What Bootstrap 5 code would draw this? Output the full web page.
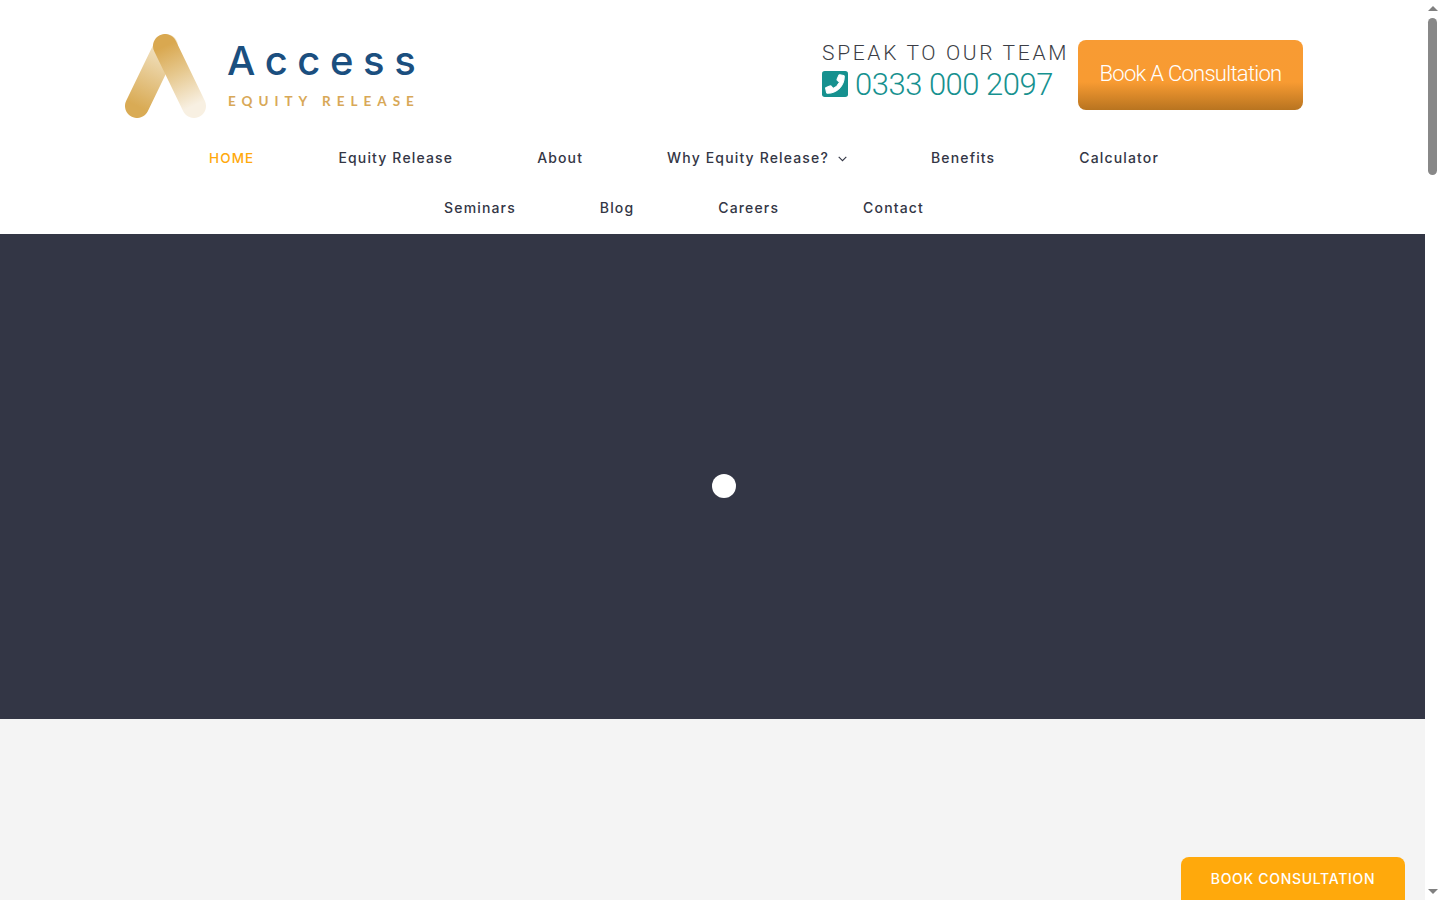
<!DOCTYPE html>
<html lang="en">
<head>
  <meta charset="UTF-8">
  <title>Access Equity Release</title>
  <link href="https://cdn.jsdelivr.net/npm/bootstrap@5.3.3/dist/css/bootstrap.min.css" rel="stylesheet">
  <style>
    html, body { height: 100%; overflow: hidden; }
    body { font-family: "Roboto", "Liberation Sans", sans-serif; background: #fff; }
    .page-col { width: 1425px; height: 900px; }
    .top-row { padding: 34px 122px 15px 125px; height: 133px; }
    .logo-mark { width: 82px; height: 84px; }
    .logo-words { margin-left: 21px; padding-top: 7px; }
    .logo-name { font: 450 40px/1 "Inter", sans-serif; letter-spacing: 9.6px; color: #1b4f7f; height: 42px; margin-left: -1px; }
    .logo-sub { font: 700 13.5px/1 "Lato", sans-serif; letter-spacing: 6px; color: #d8a857; margin-top: 12px; white-space: nowrap; }
    .speak-line { font-size: 21px; font-weight: 300; letter-spacing: 2.65px; line-height: 26px; color: #3b3d45; white-space: nowrap; margin-top: 6px; margin-left: -1px; }
    .phone-line { font-size: 31px; font-weight: 300; letter-spacing: -.5px; line-height: 36px; color: #16918f; margin-top: 1px; margin-left: -1px; }
    .phone-line svg { width: 26px; height: 26px; margin-right: 7px; margin-bottom: 3px; }
    .book-btn { width: 225px; height: 70px; margin-left: 9px; margin-top: 6px; background: linear-gradient(#f89b33 0, #f89b32 60%, #b87420 100%); color: #fff; font-size: 22px; font-weight: 300; letter-spacing: -.72px; border-radius: 8px; border: 0; padding: 0 0 3px; }
    .book-btn:hover { color: #fff; }
    .menu-row { padding-right: 57px; }
    .menu-row .nav-link { font: 450 14px/50px "Inter", sans-serif; letter-spacing: 1.15px; color: #333645; padding: 0 42px; }
    .menu-row .nav-link.on-page { color: #ffa90c; text-transform: uppercase; font-size: 13.5px; }
    .menu-row svg { width: 9px; height: 6px; margin-left: 9px; vertical-align: 1px; }
    .hero-band { height: 485px; background: #333645; padding: 19px 0 0 23px; }
    .load-dot { width: 24px; height: 24px; background: #fff; border-radius: 50%; }
    .rest-band { background: #f4f4f4; }
    .float-btn { position: fixed; left: 1181px; bottom: 0; width: 224px; height: 43px; background: #ffa90c; color: #fff; border-radius: 8px 8px 0 0; font: 500 14px/43px "Inter", sans-serif; letter-spacing: .7px; text-align: center; padding-bottom: 1px; }
    .fake-scroll { width: 15px; height: 900px; background: #fff; }
    .scroll-thumb { width: 9px; height: 157px; background: #888; border-radius: 5px; margin: 7px auto 0; }
    .scroll-up, .scroll-down { width: 0; height: 0; border-left: 5px solid transparent; border-right: 5px solid transparent; margin: 0 auto; }
    .scroll-up { border-bottom: 5px solid #808080; margin-top: 6px; }
    .scroll-down { border-top: 5px solid #808080; margin-top: auto; margin-bottom: 6px; }
  </style>
</head>
<body class="d-flex">

  <div class="page-col d-flex flex-column">
    <header class="top-row d-flex justify-content-between align-items-start">
      <a href="#" class="d-flex align-items-start text-decoration-none">
        <svg class="logo-mark" viewBox="0 0 82 84">
          <defs>
            <linearGradient id="legLeft" gradientUnits="userSpaceOnUse" x1="12" y1="72" x2="41" y2="12">
              <stop offset="0" stop-color="#d9ab55"/>
              <stop offset="1" stop-color="#f3e5c8"/>
            </linearGradient>
            <linearGradient id="legRight" gradientUnits="userSpaceOnUse" x1="40" y1="12" x2="68" y2="72">
              <stop offset="0" stop-color="#d9a850"/>
              <stop offset=".45" stop-color="#e6c88e"/>
              <stop offset="1" stop-color="#f8f0e2"/>
            </linearGradient>
          </defs>
          <line x1="12" y1="72" x2="41" y2="12" stroke="url(#legLeft)" stroke-width="24" stroke-linecap="round"/>
          <line x1="40" y1="12" x2="69" y2="72" stroke="url(#legRight)" stroke-width="24" stroke-linecap="round"/>
        </svg>
        <div class="logo-words">
          <div class="logo-name">Access</div>
          <div class="logo-sub">EQUITY RELEASE</div>
        </div>
      </a>
      <div class="d-flex align-items-start">
        <div>
          <div class="speak-line">SPEAK TO OUR TEAM</div>
          <div class="phone-line d-flex align-items-center">
            <svg viewBox="0 32 448 448">
              <rect x="0" y="32" width="448" height="448" rx="48" fill="#16918f"/>
              <path transform="translate(448 0) scale(-1 1)" fill="#fff" stroke="#fff" stroke-width="18" stroke-linejoin="round" d="M383.61 339.37l-15 65A15 15 0 0 1 354 416C194 416 64 286.29 64 126a15.7 15.7 0 0 1 11.63-14.61l65-15A18.23 18.23 0 0 1 144 96a16.27 16.27 0 0 1 13.79 9.09l30 70A17.9 17.9 0 0 1 189 181a17 17 0 0 1-5.5 11.61l-37.89 31a231.91 231.91 0 0 0 110.78 110.78l31-37.89A17 17 0 0 1 309 291a17.9 17.9 0 0 1 5.91 1.21l70 30A16.25 16.25 0 0 1 384 336a17.41 17.41 0 0 1-.39 3.37z"/>
            </svg>
            <span>0333 000 2097</span>
          </div>
        </div>
        <a href="#" class="btn book-btn d-flex align-items-center justify-content-center">Book A Consultation</a>
      </div>
    </header>

    <nav class="menu-row">
      <ul class="nav justify-content-center">
        <li class="nav-item"><a class="nav-link on-page" href="#">Home</a></li>
        <li class="nav-item"><a class="nav-link" href="#">Equity Release</a></li>
        <li class="nav-item"><a class="nav-link" href="#">About</a></li>
        <li class="nav-item"><a class="nav-link" href="#">Why Equity Release?<svg viewBox="0 0 9 6"><path d="M.7.9 4.5 4.7 8.3.9" fill="none" stroke="#333645" stroke-width="1.1"/></svg></a></li>
        <li class="nav-item"><a class="nav-link" href="#">Benefits</a></li>
        <li class="nav-item"><a class="nav-link" href="#">Calculator</a></li>
      </ul>
      <ul class="nav justify-content-center">
        <li class="nav-item"><a class="nav-link" href="#">Seminars</a></li>
        <li class="nav-item"><a class="nav-link" href="#">Blog</a></li>
        <li class="nav-item"><a class="nav-link" href="#">Careers</a></li>
        <li class="nav-item"><a class="nav-link" href="#">Contact</a></li>
      </ul>
    </nav>

    <div class="hero-band d-flex align-items-center justify-content-center mt-auto flex-shrink-0">
      <div class="load-dot"></div>
    </div>
    <div class="rest-band flex-shrink-0" style="height: 181px"></div>
  </div>

  <div class="fake-scroll d-flex flex-column">
    <div class="scroll-up"></div>
    <div class="scroll-thumb"></div>
    <div class="scroll-down"></div>
  </div>

  <a href="#" class="float-btn text-decoration-none">BOOK CONSULTATION</a>

  <script src="https://cdn.jsdelivr.net/npm/bootstrap@5.3.3/dist/js/bootstrap.bundle.min.js"></script>
</body>
</html>
